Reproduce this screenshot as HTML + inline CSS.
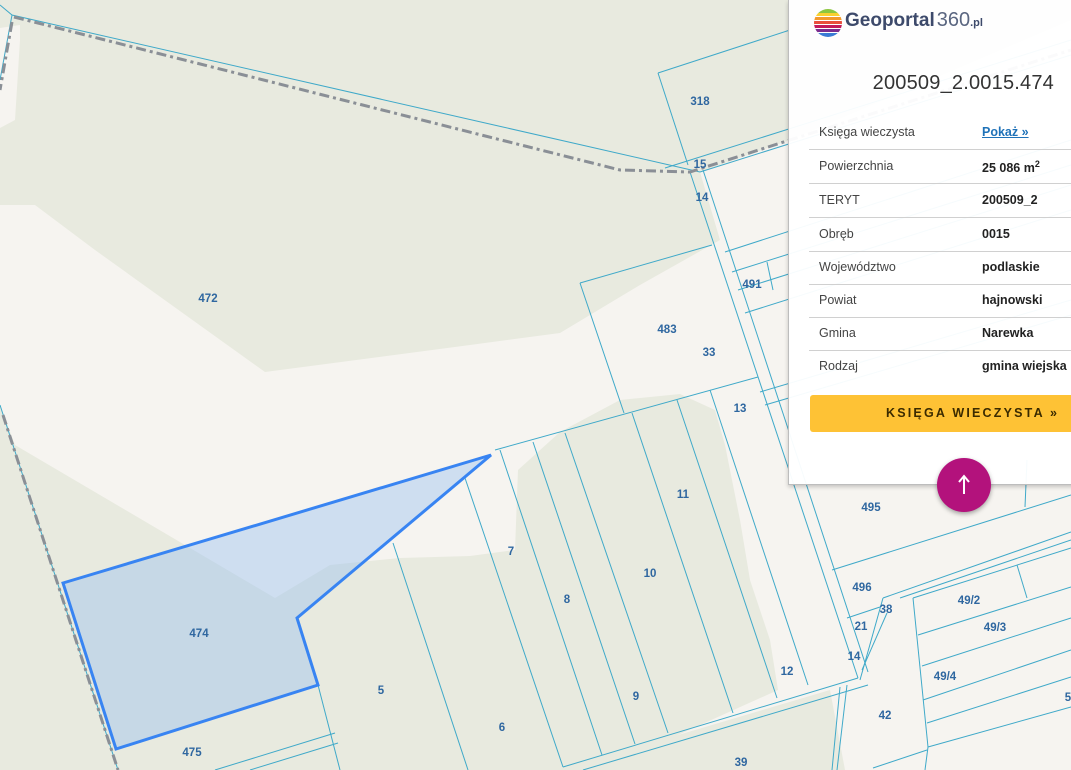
<!DOCTYPE html>
<html><head><meta charset="utf-8"><style>
html,body{margin:0;padding:0;width:1071px;height:770px;overflow:hidden;background:#f6f4f0;font-family:"Liberation Sans",sans-serif}
svg{position:absolute;left:0;top:0}
.lb{font-family:"Liberation Sans",sans-serif;font-weight:bold;font-size:11.5px;fill:#2f67a0;text-anchor:middle}
#panel{position:absolute;left:788px;top:0;width:290px;height:484px;background:rgba(255,255,255,0.955);border-left:1px solid #bdbdbd;border-bottom:1px solid #bdbdbd;box-shadow:0 2px 4px rgba(0,0,0,0.2)}
.title{position:absolute;right:25px;top:72px;font-size:20px;color:#333;letter-spacing:0.2px}
.row{position:absolute;left:20px;width:270px;height:33px;border-bottom:1px solid #d0d0d0;font-size:12.5px}
.row .k{position:absolute;left:10px;top:9px;color:#444}
.row .v{position:absolute;left:173px;top:9px;color:#222;font-weight:bold}
.btn{position:absolute;left:21px;top:395px;width:270px;height:37px;background:#fec235;border-radius:3px;font-weight:bold;font-size:12.5px;letter-spacing:2.2px;color:#3b2b00;line-height:37px;text-indent:76px}
.fab{position:absolute;left:937px;top:458px;width:54px;height:54px;border-radius:50%;background:#b3127c;box-shadow:0 2px 5px rgba(0,0,0,0.35)}
</style></head><body>
<svg width="1071" height="770" viewBox="0 0 1071 770">
<rect width="1071" height="770" fill="#f6f4f0"/>
<g fill="#e8eadf">
<polygon points="0,0 1071,0 1071,20 790,140 700,172 720,240 640,285 560,333 470,345 265,372 95,250 35,205 0,205"/>
<polygon points="0,405 15,445 275,598 330,565 400,558 470,556 515,550 518,470 560,432 620,400 680,394 715,410 725,445 740,520 750,580 770,640 778,690 600,770 0,770"/>
<polygon points="560,770 830,690 845,770"/>
</g>
<polygon points="0,28 20,25 20,40 15,120 0,128" fill="#f6f4f0"/>
<g stroke="#3fa9c9" stroke-width="1" fill="none">
<polyline points="0,5 12,15 700,172"/>
<line x1="12" y1="15" x2="0" y2="80"/>
<line x1="0" y1="405" x2="118" y2="770"/>
<line x1="658" y1="73" x2="790" y2="30"/>
<line x1="658" y1="73" x2="688" y2="165"/>
<line x1="665" y1="168" x2="1071" y2="40"/>
<line x1="700" y1="172" x2="1071" y2="55"/>
<line x1="690" y1="172" x2="858" y2="678"/>
<line x1="703" y1="170" x2="868" y2="672"/>
<line x1="725" y1="252" x2="1071" y2="140"/>
<line x1="732" y1="272" x2="1071" y2="165"/>
<line x1="738" y1="290" x2="1071" y2="185"/>
<line x1="745" y1="313" x2="1071" y2="210"/>
<line x1="767" y1="262" x2="773" y2="290"/>
<line x1="580" y1="283" x2="712" y2="245"/>
<line x1="580" y1="283" x2="624" y2="413"/>
<line x1="495" y1="450" x2="758" y2="377"/>
<line x1="760" y1="392" x2="1071" y2="300"/>
<line x1="765" y1="405" x2="1071" y2="315"/>
<line x1="563" y1="767" x2="858" y2="678"/>
<line x1="583" y1="770" x2="868" y2="685"/>
<line x1="340" y1="770" x2="318" y2="685"/>
<line x1="393" y1="543" x2="468" y2="770"/>
<line x1="465" y1="478" x2="563" y2="767"/>
<line x1="500" y1="450" x2="602" y2="755"/>
<line x1="533" y1="442" x2="635" y2="744"/>
<line x1="565" y1="433" x2="668" y2="733"/>
<line x1="632" y1="413" x2="733" y2="713"/>
<line x1="677" y1="400" x2="777" y2="698"/>
<line x1="710" y1="390" x2="808" y2="685"/>
<line x1="215" y1="770" x2="335" y2="733"/>
<line x1="250" y1="770" x2="338" y2="743"/>
<line x1="832" y1="570" x2="1071" y2="495"/>
<line x1="1027" y1="460" x2="1025" y2="507"/>
<line x1="883" y1="598" x2="1071" y2="532"/>
<line x1="900" y1="598" x2="1071" y2="540"/>
<line x1="913" y1="598" x2="1071" y2="548"/>
<line x1="847" y1="618" x2="880" y2="607"/>
<line x1="883" y1="598" x2="860" y2="680"/>
<line x1="887" y1="613" x2="862" y2="670"/>
<line x1="913" y1="598" x2="928" y2="747"/>
<line x1="928" y1="747" x2="925" y2="770"/>
<line x1="918" y1="635" x2="1071" y2="587"/>
<line x1="922" y1="666" x2="1071" y2="618"/>
<line x1="923" y1="700" x2="1071" y2="650"/>
<line x1="927" y1="723" x2="1071" y2="677"/>
<line x1="928" y1="747" x2="1071" y2="707"/>
<line x1="1017" y1="565" x2="1027" y2="598"/>
<line x1="847" y1="685" x2="837" y2="770"/>
<line x1="840" y1="687" x2="832" y2="770"/>
<line x1="873" y1="768" x2="927" y2="750"/>
</g>
<g stroke="#8a8f96" stroke-width="3" fill="none" stroke-dasharray="10,4,3,4">
<polyline points="14,17 620,170 690,172 1071,50"/>
<line x1="12" y1="22" x2="0" y2="90"/>
<line x1="3" y1="415" x2="118" y2="770"/>
</g>
<polygon points="63,583 491,455 297,618 318,685 116,749" fill="rgba(150,190,240,0.42)" stroke="#3884f2" stroke-width="3"/>
<g class="lb">
<text x="208" y="302">472</text><text x="700" y="105">318</text><text x="700" y="168">15</text><text x="702" y="201">14</text>
<text x="752" y="288">491</text><text x="667" y="333">483</text><text x="709" y="356">33</text><text x="740" y="412">13</text>
<text x="683" y="498">11</text><text x="871" y="511">495</text><text x="650" y="577">10</text><text x="511" y="555">7</text>
<text x="567" y="603">8</text><text x="199" y="637">474</text><text x="381" y="694">5</text><text x="862" y="591">496</text>
<text x="886" y="613">38</text><text x="861" y="630">21</text><text x="969" y="604">49/2</text><text x="995" y="631">49/3</text>
<text x="854" y="660">14</text><text x="787" y="675">12</text><text x="945" y="680">49/4</text><text x="636" y="700">9</text>
<text x="502" y="731">6</text><text x="885" y="719">42</text><text x="192" y="756">475</text><text x="741" y="766">39</text>
<text x="1068" y="701">5</text>
</g>
</svg>
<div id="panel">
<svg width="30" height="30" style="left:24px;top:8px" viewBox="0 0 30 30">
<clipPath id="c"><circle cx="15" cy="15" r="14"/></clipPath>
<g clip-path="url(#c)">
<rect y="0" width="30" height="5" fill="#8cc63f"/><rect y="5" width="30" height="4" fill="#f9d030"/>
<rect y="9" width="30" height="4" fill="#f39a2b"/><rect y="13" width="30" height="4" fill="#e94e3c"/>
<rect y="17" width="30" height="4" fill="#c2185b"/><rect y="21" width="30" height="4" fill="#7b2d8f"/>
<rect y="25" width="30" height="5" fill="#3a7bd5"/>
<rect y="8" width="30" height="1" fill="#fff"/><rect y="12" width="30" height="1" fill="#fff"/><rect y="16" width="30" height="1" fill="#fff"/><rect y="20" width="30" height="1" fill="#fff"/><rect y="24" width="30" height="1" fill="#fff"/>
</g></svg>
<div style="position:absolute;left:56px;top:9px;font-size:19px;font-weight:bold;color:#3d4a6b;white-space:nowrap">Geoportal<span style="font-weight:normal;color:#5a6680;font-size:20px;margin-left:2px">360</span><span style="font-size:11px">.pl</span></div>
<div class="title">200509_2.0015.474</div>
<div class="row" style="top:116px"><span class="k">Księga wieczysta</span><span class="v" style="color:#1f72b8;text-decoration:underline">Pokaż »</span></div>
<div class="row" style="top:150px"><span class="k">Powierzchnia</span><span class="v">25 086 m<sup style="font-size:9px">2</sup></span></div>
<div class="row" style="top:184px"><span class="k">TERYT</span><span class="v">200509_2</span></div>
<div class="row" style="top:218px"><span class="k">Obręb</span><span class="v">0015</span></div>
<div class="row" style="top:251px"><span class="k">Województwo</span><span class="v">podlaskie</span></div>
<div class="row" style="top:284px"><span class="k">Powiat</span><span class="v">hajnowski</span></div>
<div class="row" style="top:317px"><span class="k">Gmina</span><span class="v">Narewka</span></div>
<div class="row" style="top:350px;border-bottom:none"><span class="k">Rodzaj</span><span class="v">gmina wiejska</span></div>
<div class="btn">KSIĘGA WIECZYSTA »</div>
</div>
<div class="fab"><svg width="54" height="54" viewBox="0 0 54 54"><path d="M27 36 V19 M22 24 L27 18 L32 24" stroke="#fff" stroke-width="2" fill="none"/></svg></div>
</body></html>
